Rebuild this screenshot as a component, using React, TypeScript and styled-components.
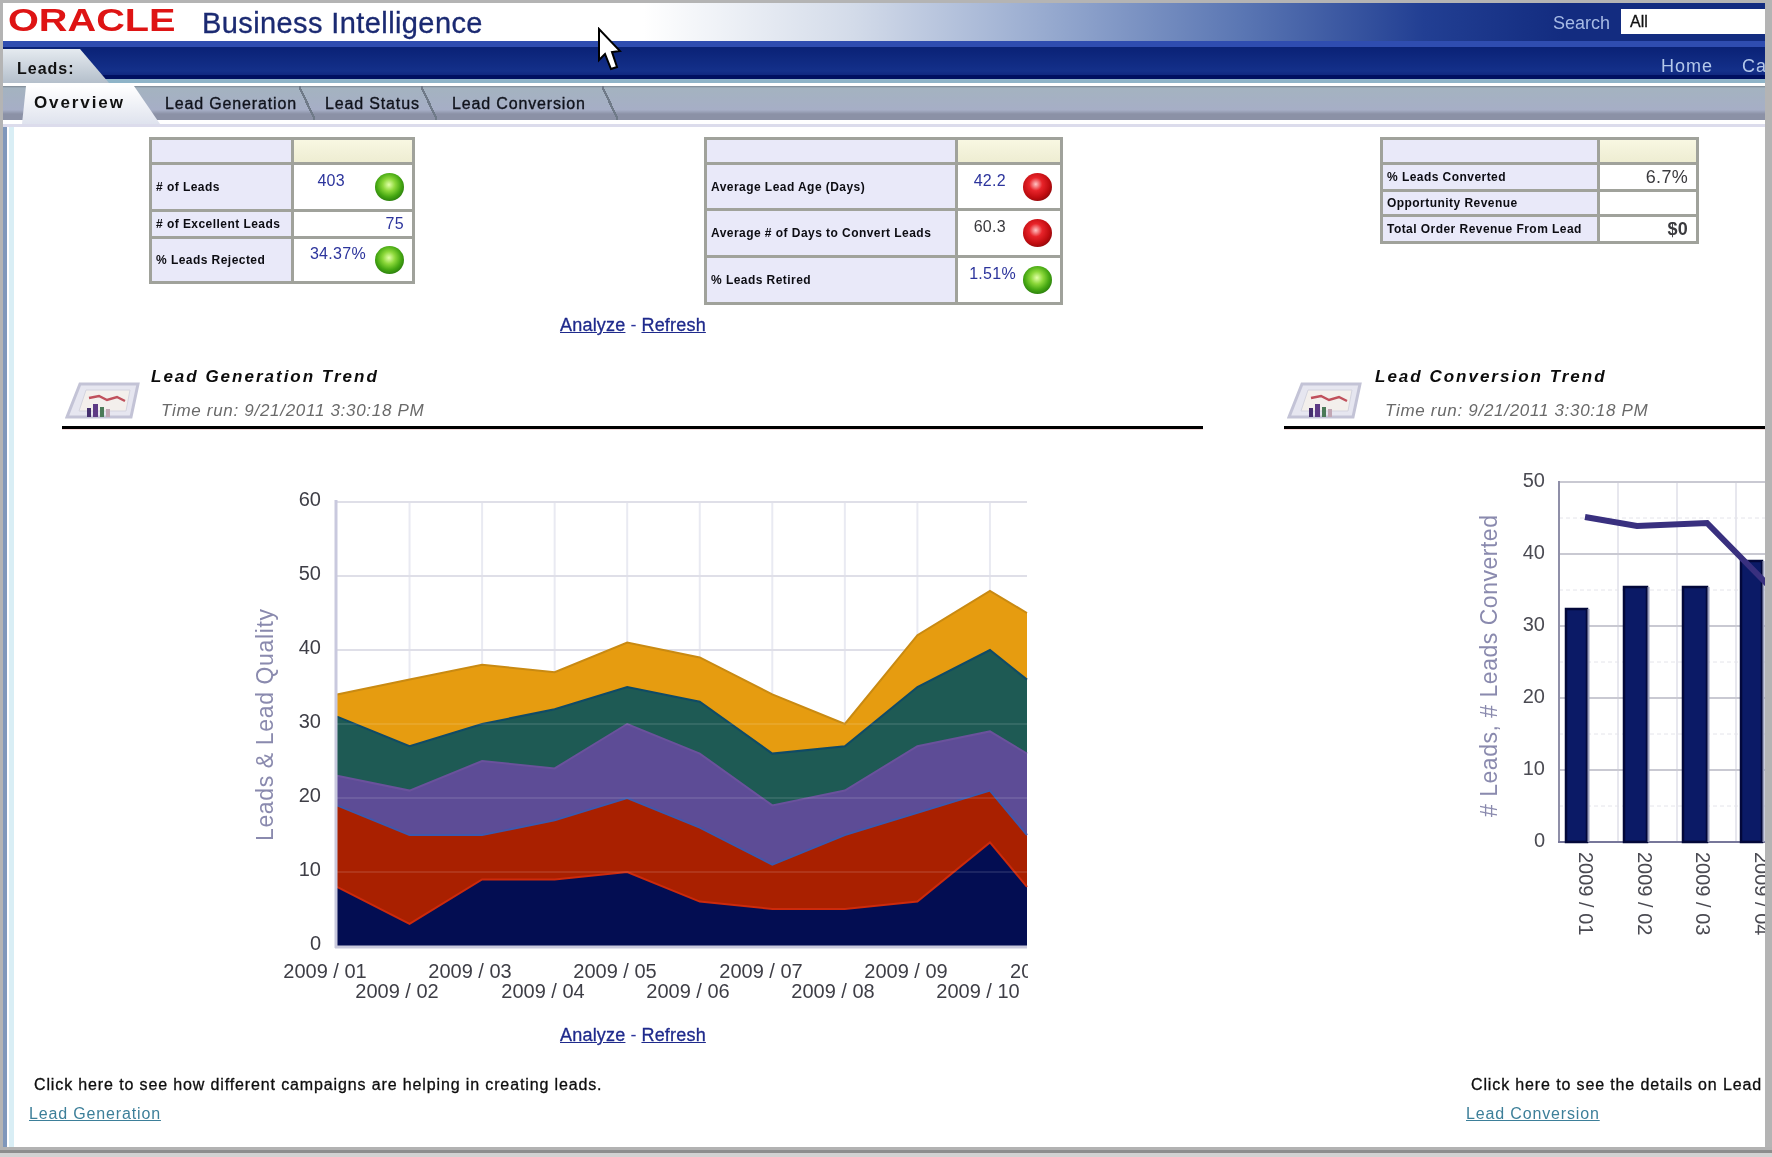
import React from 'react';
import styled, { createGlobalStyle } from 'styled-components';

const GlobalStyle = createGlobalStyle`
  html, body {
    margin: 0;
    padding: 0;
    background: #fff;
  }
  body {
    font-family: "Liberation Sans", Arial, sans-serif;
  }
`;

const Window = styled.div`
  position: relative;
  width: 1772px;
  height: 1157px;
  overflow: hidden;
  display: flex;
  flex-direction: column;
  padding: 3px 7px 0 3px;
  box-sizing: border-box;
  background: #b4b4b4;
  filter: blur(0.65px);
`;

const Banner = styled.div`
  height: 38px;
  flex: none;
  display: flex;
  align-items: flex-start;
  background: linear-gradient(
    90deg,
    #fff 0,
    #fff 640px,
    #d3dbe9 850px,
    #92a6cd 1060px,
    #5a76b3 1240px,
    #223f93 1420px,
    #132c80 1560px
  );
`;

const LogoBox = styled.div`
  width: 199px;
  height: 38px;
  flex: none;
  overflow: hidden;
`;

const Logo = styled.span`
  display: inline-block;
  margin: 3px 0 0 5px;
  font-size: 31px;
  line-height: 30px;
  font-weight: 700;
  color: #de1414;
  transform: scaleX(1.28);
  transform-origin: left center;
`;

const ProductName = styled.span`
  font-size: 29px;
  line-height: 38px;
  margin-top: 1px;
  color: #1b2a72;
  letter-spacing: 0.4px;
  -webkit-text-stroke: 0.3px #1b2a72;
`;

const Spacer = styled.div`
  flex: 1;
`;

const SearchLabel = styled.span`
  font-size: 18px;
  line-height: 38px;
  margin-top: 1px;
  color: #a6bae4;
`;

const SearchBox = styled.div`
  width: 144px;
  height: 25px;
  margin: 6px 0 0 11px;
  padding-left: 9px;
  box-sizing: border-box;
  background: #fff;
  color: #111;
  font-size: 16px;
  line-height: 25px;
  -webkit-text-stroke: 0.3px #111;
`;

const NavBar = styled.div`
  height: 45px;
  flex: none;
  overflow: hidden;
  display: flex;
  justify-content: space-between;
  align-items: flex-start;
  box-sizing: border-box;
  border-top: 6px solid #2f4db0;
  background: linear-gradient(
    #0a2276 0,
    #14308a 24px,
    #102880 28px,
    #001060 28px,
    #001060 32px,
    #8fb4c8 32px,
    #8fb4c8 36px,
    #fff 36px
  );
`;

const SectionTab = styled.div`
  width: 106px;
  height: 36px;
  box-sizing: border-box;
  padding: 13px 0 0 14px;
  font-size: 16px;
  line-height: 18px;
  font-weight: 700;
  letter-spacing: 1px;
  color: #111;
  background: linear-gradient(#e8edf2, #b4bfcb);
  clip-path: polygon(0 2px, 77px 2px, 106px 36px, 0 36px);
`;

const NavLinks = styled.div`
  display: flex;
  gap: 29px;
  width: 104px;
  padding-top: 9px;
  margin-left: auto;
  white-space: nowrap;
  font-size: 18px;
  line-height: 20px;
  letter-spacing: 1px;
  color: #b4c8ea;
`;

const TabBar = styled.div`
  height: 38px;
  flex: none;
  display: flex;
  padding-left: 19px;
  box-sizing: border-box;
  background: linear-gradient(#7c8792 0, #a4b3c0 2px, #a6aec6 24px, #8b91a6 28px, #8b91a6 34px, #fff 34px);
`;

const ActiveTab = styled.div`
  width: 138px;
  height: 38px;
  box-sizing: border-box;
  padding: 7px 0 0 12px;
  font-size: 17px;
  line-height: 20px;
  font-weight: 700;
  letter-spacing: 1.9px;
  color: #111;
  background: linear-gradient(#fff, #dfe3ee);
  clip-path: polygon(4px 0, 112px 0, 138px 38px, 0 38px);
`;

const Tab = styled.div<{ $width: number; $pad: number }>`
  position: relative;
  width: ${props => props.$width}px;
  height: 34px;
  box-sizing: border-box;
  padding: 8px 0 0 ${props => props.$pad}px;
  font-size: 16px;
  line-height: 20px;
  letter-spacing: 0.85px;
  white-space: nowrap;
  color: #10131c;
  -webkit-text-stroke: 0.35px #10131c;

  &::after {
    content: '';
    position: absolute;
    top: 0;
    right: 0;
    width: 16px;
    height: 34px;
    background: linear-gradient(to top right, transparent 46%, #6f7a88 46%, #6f7a88 54%, transparent 54%);
  }
`;

const Main = styled.div`
  flex: 1;
  min-height: 0;
  overflow: hidden;
  background: linear-gradient(90deg, #7f97bb 4px, #fff 4px, #fff 6px, #d9eef5 6px, #d9eef5 11px, #fff 11px);
  padding-left: 4px;
  border-top: 3px solid #dcdcec;
`;

const TablesRow = styled.div`
  display: flex;
  align-items: flex-start;
  height: 168px;
  padding-top: 10px;
`;

const KpiTable = styled.div<{ $left: number; $columns: string; $rows: string }>`
  flex: none;
  margin-left: ${props => props.$left}px;
  display: grid;
  grid-template-columns: ${props => props.$columns};
  grid-template-rows: ${props => props.$rows};
  gap: 3px;
  border: 3px solid #a0a29b;
  background: #a0a29b;
`;

const HeadLabel = styled.div`
  background: #e9e9f9;
`;

const HeadValue = styled.div`
  background: linear-gradient(#f8f7e2, #eeedd2);
`;

const RowLabel = styled.div`
  display: flex;
  align-items: center;
  padding-left: 4px;
  background: #e9e9f9;
  white-space: nowrap;
  font-size: 12px;
  font-weight: 700;
  letter-spacing: 0.45px;
  color: #0c0c12;
`;

const RowValue = styled.div<{ $pad?: number }>`
  display: flex;
  justify-content: flex-end;
  align-items: center;
  padding-right: ${props => props.$pad ?? 8}px;
  background: #fff;
`;

const Figure = styled.span<{ $gap?: number; $lift?: number; $dark?: boolean; $size?: number; $bold?: boolean }>`
  margin-right: ${props => props.$gap ?? 0}px;
  margin-bottom: ${props => props.$lift ?? 0}px;
  font-size: ${props => props.$size ?? 16}px;
  font-weight: ${props => (props.$bold ? 700 : 400)};
  line-height: 20px;
  letter-spacing: 0.3px;
  color: ${props => (props.$dark ? '#3a3a3e' : '#2c349c')};
`;

const Dot = styled.span<{ $tone: 'green' | 'red' }>`
  flex: none;
  width: 29px;
  height: 28px;
  border-radius: 50%;
  background: ${props =>
    props.$tone === 'green'
      ? 'radial-gradient(circle at 48% 42%, #e2ffa8 0, #8cd83a 28%, #46a812 55%, #16600a 90%)'
      : 'radial-gradient(circle at 44% 40%, #ffc4c4 0, #e8242a 28%, #c00c10 58%, #6a0608 92%)'};
`;

const Links = styled.div<{ $left: number; $top: number }>`
  margin: ${props => props.$top}px 0 0 ${props => props.$left}px;
  height: 22px;
  font-size: 18px;
  line-height: 22px;
  white-space: nowrap;
  color: #2c349c;
`;

const TextLink = styled.a`
  color: #1f2a8c;
  text-decoration: underline;
  letter-spacing: 0.2px;
  -webkit-text-stroke: 0.3px #1f2a8c;
`;

const SectionsRow = styled.div`
  display: flex;
  align-items: flex-start;
  margin-top: 30px;
`;

const Section = styled.div<{ $left: number; $width: number }>`
  flex: none;
  margin-left: ${props => props.$left}px;
  width: ${props => props.$width}px;
`;

const SectionHeader = styled.div`
  display: flex;
  align-items: flex-end;
  height: 60px;
  box-sizing: content-box;
  padding-left: 3px;
  border-bottom: 3px solid #000;
  box-shadow: 0 1px 0 #f6dcdc;
`;

const HeaderIcon = styled.svg`
  flex: none;
  width: 75px;
  height: 38px;
  margin-bottom: 7px;
`;

const HeaderText = styled.div<{ $inset: number }>`
  margin: 0 0 5px ${props => props.$inset}px;
  white-space: nowrap;
`;

const SectionTitle = styled.div`
  font-size: 17px;
  line-height: 20px;
  font-weight: 700;
  font-style: italic;
  letter-spacing: 2px;
  color: #0c0c0c;
`;

const RunTime = styled.div`
  margin: 14px 0 0 10px;
  font-size: 17px;
  line-height: 20px;
  font-style: italic;
  letter-spacing: 0.7px;
  color: #6a6a6a;
`;

const ChartSvg = styled.svg<{ $left: number; $top: number }>`
  display: block;
  margin: ${props => props.$top}px 0 0 ${props => props.$left}px;
`;

const FooterRow = styled.div`
  display: flex;
  margin-top: 28px;
`;

const FooterBlock = styled.div<{ $left: number; $width?: number }>`
  flex: none;
  margin-left: ${props => props.$left}px;
  width: ${props => (props.$width ? `${props.$width}px` : 'auto')};
  white-space: nowrap;
`;

const FooterNote = styled.div`
  font-size: 16px;
  line-height: 22px;
  letter-spacing: 0.87px;
  color: #0e0e0e;
  -webkit-text-stroke: 0.3px #0e0e0e;
`;

const FooterLink = styled.a`
  display: inline-block;
  margin: 7px 0 0 -5px;
  font-size: 16px;
  line-height: 22px;
  color: #3d7f99;
  text-decoration: underline;
  letter-spacing: 0.85px;
`;

const BottomEdge = styled.div`
  flex: none;
  height: 10px;
  margin: 0 -7px 0 -3px;
  background: linear-gradient(#b2b2b2 3px, #8d8d8d 3px, #8d8d8d 6px, #d2d2d2 6px);
`;

const Cursor = styled.svg`
  position: absolute;
  left: 597px;
  top: 27px;
  width: 25px;
  height: 44px;
`;

const areaColumns = [0, 1, 2, 3, 4, 5, 6, 7, 8, 9, 10].map(i => (i === 10 ? 1027 : 337 + 72.55 * i));
const areaY = (v: number) => 947 - 7.4 * v;

const areaSeries = [
  { top: [34, 36, 38, 37, 41, 39, 34, 30, 42, 48, 45], fill: '#e69c10', edge: '#c98a12' },
  { top: [31, 27, 30, 32, 35, 33, 26, 27, 35, 40, 36], fill: '#1e5a54', edge: '#0f4a66' },
  { top: [23, 21, 25, 24, 30, 26, 19, 21, 27, 29, 26], fill: '#5d4c96', edge: '#6a529c' },
  { top: [19, 15, 15, 17, 20, 16, 11, 15, 18, 21, 15], fill: '#a92000', edge: '#3f58ac' },
  { top: [8, 3, 9, 9, 10, 6, 5, 5, 6, 14, 8], fill: '#030d52', edge: '#cc2a0c' },
];

const areaTicks = [
  { label: '2009 / 01', x: 325, y: 979 },
  { label: '2009 / 02', x: 397, y: 999 },
  { label: '2009 / 03', x: 470, y: 979 },
  { label: '2009 / 04', x: 543, y: 999 },
  { label: '2009 / 05', x: 615, y: 979 },
  { label: '2009 / 06', x: 688, y: 999 },
  { label: '2009 / 07', x: 761, y: 979 },
  { label: '2009 / 08', x: 833, y: 999 },
  { label: '2009 / 09', x: 906, y: 979 },
  { label: '2009 / 10', x: 978, y: 999 },
  { label: '2009 / 11', x: 1051, y: 979 },
];

const AreaChart = () => (
  <ChartSvg $left={178} $top={60} width={790} height={520} viewBox="240 490 790 520">
    <defs>
      <clipPath id="area-clip">
        <rect x="240" y="490" width="788" height="520" />
      </clipPath>
    </defs>
    {[1, 2, 3, 4, 5, 6, 7, 8, 9].map(i => (
      <line key={i} x1={areaColumns[i]} x2={areaColumns[i]} y1={503} y2={947} stroke="#e9eaf2" strokeWidth="2" />
    ))}
    {[10, 20, 30, 40, 50, 60].map(v => (
      <line key={v} x1={337} x2={1027} y1={areaY(v)} y2={areaY(v)} stroke="#dfdfe8" strokeWidth="2" />
    ))}
    {areaSeries.map(s => {
      const edge = s.top.map((v, i) => `${areaColumns[i]},${areaY(v)}`).join(' ');
      return (
        <g key={s.fill}>
          <polygon points={`337,947 ${edge} 1027,947`} fill={s.fill} />
          <polyline points={edge} fill="none" stroke={s.edge} strokeWidth="2" />
        </g>
      );
    })}
    {[10, 20, 30].map(v => (
      <line key={v} x1={337} x2={1027} y1={areaY(v)} y2={areaY(v)} stroke="#fff" strokeOpacity="0.1" strokeWidth="2" />
    ))}
    <line x1={336} x2={336} y1={501} y2={949} stroke="#c9c9de" strokeWidth="3" />
    <line x1={335} x2={1027} y1={948} y2={948} stroke="#c9c9dc" strokeWidth="3" />
    <g fontFamily="Liberation Sans, Arial, sans-serif" fontSize="20" fill="#3e3e46">
      {[0, 10, 20, 30, 40, 50, 60].map(v => (
        <text key={v} x={321} y={areaY(v) + 4} textAnchor="end">
          {v}
        </text>
      ))}
      <g clipPath="url(#area-clip)">
        {areaTicks.map(t => (
          <text key={t.label} x={t.x} y={t.y} textAnchor="middle">
            {t.label}
          </text>
        ))}
      </g>
    </g>
    <text
      transform="translate(273 726) rotate(-90)"
      textAnchor="middle"
      fontFamily="Liberation Sans, Arial, sans-serif"
      fontSize="23"
      fill="#8a8aae"
      textLength={232}
    >
      Leads &amp; Lead Quality
    </text>
  </ChartSvg>
);

const barItems = [
  { x: 1566, width: 21, top: 609, tickX: 1579, label: '2009 / 01' },
  { x: 1624, width: 23, top: 587, tickX: 1638, label: '2009 / 02' },
  { x: 1683, width: 24, top: 587, tickX: 1696, label: '2009 / 03' },
  { x: 1741, width: 21, top: 561, tickX: 1755, label: '2009 / 04' },
];

const BarChart = () => (
  <ChartSvg $left={186} $top={41} width={295} height={480} viewBox="1470 470 295 480">
    {[1618, 1677, 1736].map(x => (
      <line key={x} x1={x} x2={x} y1={482} y2={842} stroke="#e7e7ee" strokeWidth="2" />
    ))}
    {[0, 1, 2, 3, 4, 5].map(i => (
      <line key={i} x1={1559} x2={1765} y1={482 + 72 * i} y2={482 + 72 * i} stroke="#c9c9d2" strokeWidth="2" />
    ))}
    {[0, 1, 2, 3, 4].map(i => (
      <line
        key={i}
        x1={1559}
        x2={1765}
        y1={518 + 72 * i}
        y2={518 + 72 * i}
        stroke="#e4e4ea"
        strokeWidth="1"
        strokeDasharray="4 3"
      />
    ))}
    <line x1={1559} x2={1559} y1={481} y2={843} stroke="#8f8fa8" strokeWidth="2" />
    <line x1={1558} x2={1765} y1={842} y2={842} stroke="#77779a" strokeWidth="2" />
    {barItems.map(b => (
      <g key={b.x}>
        <rect x={b.x} y={b.top} width={b.width} height={842 - b.top} fill="#0b1a66" stroke="#03083a" strokeWidth="2.5" />
        <line
          x1={b.x + b.width + 1.5}
          x2={b.x + b.width + 1.5}
          y1={b.top}
          y2={842}
          stroke="#9a9ebb"
          strokeWidth="2"
        />
      </g>
    ))}
    <polyline
      points="1585,517 1637,526 1707,523 1767,584"
      fill="none"
      stroke="#39307f"
      strokeWidth="6"
    />
    <g fontFamily="Liberation Sans, Arial, sans-serif" fontSize="20" fill="#4a4a52">
      {[0, 10, 20, 30, 40, 50].map((v, i) => (
        <text key={v} x={1545} y={847 - 72 * i} textAnchor="end">
          {v}
        </text>
      ))}
      {barItems.map(b => (
        <text key={b.label} transform={`translate(${b.tickX} 852) rotate(90)`}>
          {b.label}
        </text>
      ))}
    </g>
    <text
      transform="translate(1497 666) rotate(-90)"
      textAnchor="middle"
      fontFamily="Liberation Sans, Arial, sans-serif"
      fontSize="23"
      fill="#8a8aae"
      textLength={302}
    >
      # Leads, # Leads Converted
    </text>
  </ChartSvg>
);

const ReportIcon = () => (
  <HeaderIcon viewBox="0 0 75 38">
    <polygon points="15,3 73,3 66,36 2,36" fill="#e6e6f0" stroke="#c3c3d6" strokeWidth="3" />
    <polygon points="21,9 65,9 61,30 14,30" fill="#f3efec" stroke="#d4d4df" />
    <polyline points="24,17 34,15 42,19 52,16 60,20" fill="none" stroke="#c0505c" strokeWidth="2.5" />
    <rect x="22" y="27" width="4" height="9" fill="#45306f" />
    <rect x="28" y="23" width="5" height="13" fill="#5d3a85" />
    <rect x="35" y="26" width="4" height="10" fill="#4b7a58" />
    <rect x="41" y="28" width="4" height="8" fill="#c2a7b5" />
  </HeaderIcon>
);

const App = () => (
  <>
    <GlobalStyle />
    <Window>
      <Banner>
        <LogoBox>
          <Logo>ORACLE</Logo>
        </LogoBox>
        <ProductName>Business Intelligence</ProductName>
        <Spacer />
        <SearchLabel>Search</SearchLabel>
        <SearchBox>All</SearchBox>
      </Banner>
      <NavBar>
        <SectionTab>Leads:</SectionTab>
        <NavLinks>
          <span>Home</span>
          <span>Catalog</span>
        </NavLinks>
      </NavBar>
      <TabBar>
        <ActiveTab>Overview</ActiveTab>
        <Tab $width={155} $pad={5}>
          Lead Generation
        </Tab>
        <Tab $width={122} $pad={10}>
          Lead Status
        </Tab>
        <Tab $width={181} $pad={15}>
          Lead Conversion
        </Tab>
      </TabBar>
      <Main>
        <TablesRow>
          <KpiTable $left={142} $columns="139px 118px" $rows="22px 44px 24px 42px">
            <HeadLabel />
            <HeadValue />
            <RowLabel># of Leads</RowLabel>
            <RowValue>
              <Figure $gap={30} $lift={12}>
                403
              </Figure>
              <Dot $tone="green" />
            </RowValue>
            <RowLabel># of Excellent Leads</RowLabel>
            <RowValue>
              <Figure>75</Figure>
            </RowValue>
            <RowLabel>% Leads Rejected</RowLabel>
            <RowValue>
              <Figure $gap={9} $lift={12}>
                34.37%
              </Figure>
              <Dot $tone="green" />
            </RowValue>
          </KpiTable>
          <KpiTable $left={289} $columns="248px 102px" $rows="22px 43px 44px 44px">
            <HeadLabel />
            <HeadValue />
            <RowLabel>Average Lead Age (Days)</RowLabel>
            <RowValue>
              <Figure $gap={17} $lift={12}>
                42.2
              </Figure>
              <Dot $tone="red" />
            </RowValue>
            <RowLabel>Average # of Days to Convert Leads</RowLabel>
            <RowValue>
              <Figure $gap={17} $lift={12} $dark>
                60.3
              </Figure>
              <Dot $tone="red" />
            </RowValue>
            <RowLabel>% Leads Retired</RowLabel>
            <RowValue>
              <Figure $gap={7} $lift={12}>
                1.51%
              </Figure>
              <Dot $tone="green" />
            </RowValue>
          </KpiTable>
          <KpiTable $left={317} $columns="214px 96px" $rows="22px 24px 22px 24px">
            <HeadLabel />
            <HeadValue />
            <RowLabel>% Leads Converted</RowLabel>
            <RowValue>
              <Figure $dark $size={18}>
                6.7%
              </Figure>
            </RowValue>
            <RowLabel>Opportunity Revenue</RowLabel>
            <RowValue />
            <RowLabel>Total Order Revenue From Lead</RowLabel>
            <RowValue>
              <Figure $dark $size={18} $bold>
                $0
              </Figure>
            </RowValue>
          </KpiTable>
        </TablesRow>
        <Links $left={553} $top={9}>
          <TextLink>Analyze</TextLink> - <TextLink>Refresh</TextLink>
        </Links>
        <SectionsRow>
          <Section $left={55} $width={1141}>
            <SectionHeader>
              <ReportIcon />
              <HeaderText $inset={11}>
                <SectionTitle>Lead Generation Trend</SectionTitle>
                <RunTime>Time run: 9/21/2011 3:30:18 PM</RunTime>
              </HeaderText>
            </SectionHeader>
            <AreaChart />
            <Links $left={498} $top={15}>
              <TextLink>Analyze</TextLink> - <TextLink>Refresh</TextLink>
            </Links>
          </Section>
          <Section $left={81} $width={481}>
            <SectionHeader>
              <ReportIcon />
              <HeaderText $inset={13}>
                <SectionTitle>Lead Conversion Trend</SectionTitle>
                <RunTime>Time run: 9/21/2011 3:30:18 PM</RunTime>
              </HeaderText>
            </SectionHeader>
            <BarChart />
          </Section>
        </SectionsRow>
        <FooterRow>
          <FooterBlock $left={27} $width={1437}>
            <FooterNote>Click here to see how different campaigns are helping in creating leads.</FooterNote>
            <FooterLink>Lead Generation</FooterLink>
          </FooterBlock>
          <FooterBlock $left={0}>
            <FooterNote>Click here to see the details on Lead Conversion</FooterNote>
            <FooterLink>Lead Conversion</FooterLink>
          </FooterBlock>
        </FooterRow>
      </Main>
      <BottomEdge />
      <Cursor viewBox="0 0 25 44">
        <path d="M2 2 L2 33 L8 27 L14 42 L20 40 L15 25 L23 24 Z" fill="#fff" stroke="#000" strokeWidth="2" />
      </Cursor>
    </Window>
  </>
);

export default App;
